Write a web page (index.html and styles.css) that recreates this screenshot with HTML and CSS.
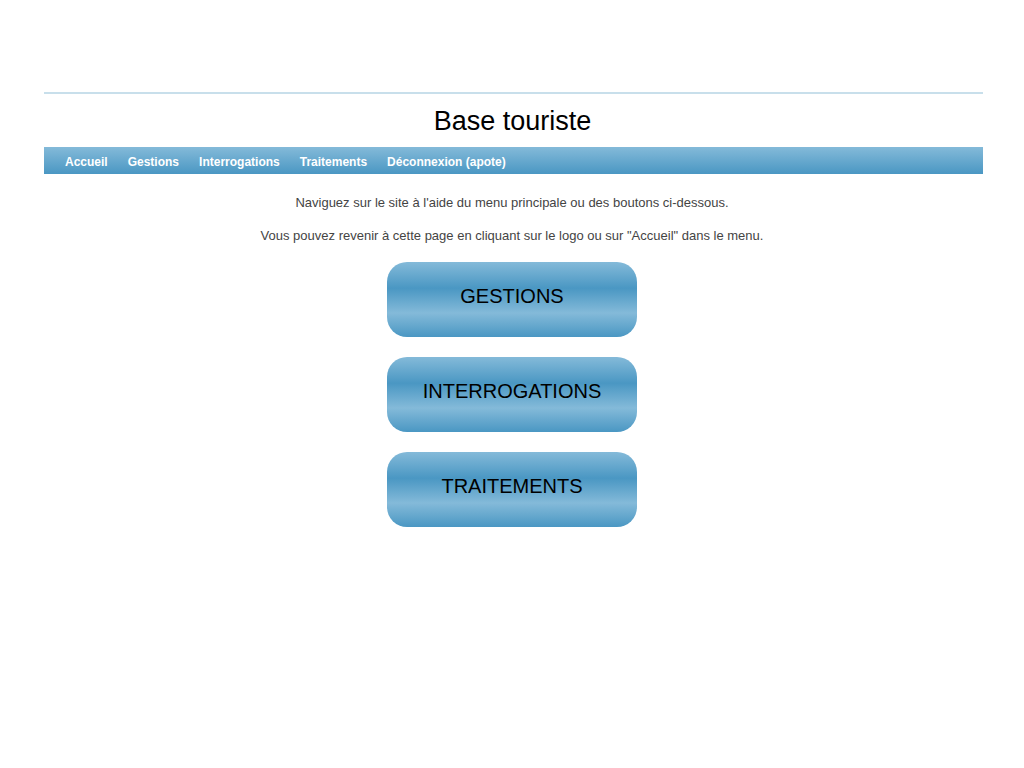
FILE: index.html
```html
<!DOCTYPE html>
<html lang="fr">
<head>
<meta charset="utf-8">
<title>Base touriste</title>
<link rel="stylesheet" href="styles.css">
</head>
<body>
<header class="header">
  <div class="rule"></div>
  <h1 class="title">Base touriste</h1>
  <nav class="nav">
    <ul class="menu">
      <li><a href="#">Accueil</a></li>
      <li><a href="#">Gestions</a></li>
      <li><a href="#">Interrogations</a></li>
      <li><a href="#">Traitements</a></li>
      <li><a href="#">Déconnexion (apote)</a></li>
    </ul>
  </nav>
</header>
<main class="content">
  <p class="intro">Naviguez sur le site à l'aide du menu principale ou des boutons ci-dessous.</p>
  <p class="intro">Vous pouvez revenir à cette page en cliquant sur le logo ou sur "Accueil" dans le menu.</p>
  <div class="buttons">
    <a class="bigbtn" href="#">GESTIONS</a>
    <a class="bigbtn" href="#">INTERROGATIONS</a>
    <a class="bigbtn" href="#">TRAITEMENTS</a>
  </div>
</main>
</body>
</html>
```
FILE: styles.css
```css
html, body {
  margin: 0;
  padding: 0;
  background: #ffffff;
}
body {
  font-family: "Liberation Sans", Arial, sans-serif;
}
.header {
  padding: 92px 41px 0 44px;
}
.rule {
  height: 2px;
  background: #c8dfeb;
}
.title {
  margin: 0;
  padding: 12px 0 11px 0;
  text-align: center;
  font-weight: normal;
  font-size: 27px;
  line-height: 30px;
  color: #000;
  transform: translateX(-1px);
}
.nav {
  height: 27px;
  background: linear-gradient(to bottom, #84bad9 0%, #4a97c3 100%);
}
.menu {
  list-style: none;
  margin: 0;
  padding: 3px 0 0 11px;
  display: flex;
  height: 24px;
  align-items: center;
}
.menu li a {
  display: block;
  padding: 0 10px;
  color: #fff;
  font-weight: bold;
  font-size: 12px;
  line-height: 24px;
  text-decoration: none;
}
.content {
  padding-top: 21px;
  text-align: center;
}
.intro {
  margin: 0 0 18px 0;
  font-size: 13px;
  line-height: 15px;
  color: #444;
}
.buttons {
  display: flex;
  flex-direction: column;
  align-items: center;
  gap: 20px;
  padding-top: 1px;
}
.bigbtn {
  display: flex;
  align-items: center;
  justify-content: center;
  box-sizing: border-box;
  width: 250px;
  height: 75px;
  padding-bottom: 6px;
  border-radius: 20px;
  background: linear-gradient(to bottom, #84bad9 0%, #4a97c3 35%, #84bad9 68%, #4a97c3 100%);
  color: #000;
  font-size: 20px;
  text-decoration: none;
}
```
